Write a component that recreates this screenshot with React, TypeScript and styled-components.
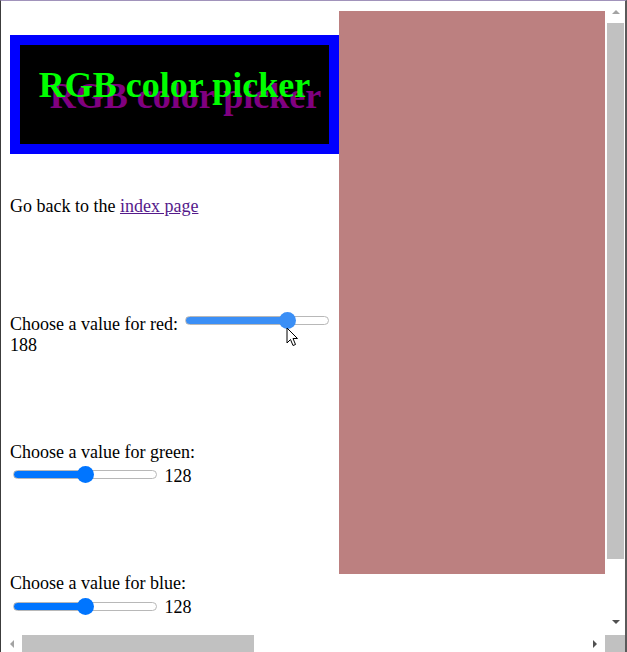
import React from "react";
import styled, {createGlobalStyle} from "styled-components";

const GlobalStyle = createGlobalStyle`
  html, body {
    margin: 0;
    padding: 0;
    background: #fff;
  }
  body {
    font-family: "Liberation Serif", "Times New Roman", serif;
    font-size: 18px;
    color: #000;
  }
`;

const Window = styled('div')`
  position: relative;
  width: 627px;
  height: 652px;
  box-sizing: border-box;
  border-top: 1px solid #a193bb;
  border-left: 1px solid #3c3c3c;
  border-right: 2px solid #5a5a5a;
  display: flex;
  flex-direction: column;
  overflow: hidden;
  background: #fff;
`;

const MainRow = styled('div')`
  display: flex;
  height: 634px;
`;

const Viewport = styled('div')`
  flex: 1;
  overflow: hidden;
`;

const Page = styled('div')`
  display: flex;
  align-items: flex-start;
  padding: 10px 0 0 9px;
`;

const LeftColumn = styled('div')`
  width: 329px;
  padding-top: 24px;
`;

const Banner = styled('div')`
  height: 99px;
  border: 10px solid #0000ff;
  background: #000;
`;

const Title = styled('h1')`
  margin: 0;
  padding-top: 19px;
  font-size: 36px;
  font-weight: bold;
  text-align: center;
  color: #00ff00;
  text-shadow: 11px 11px 0 #800080;
`;

const Intro = styled('p')`
  margin: 42px 0 0;
`;

const IndexLink = styled('a')`
  color: #551a8b;
  text-decoration: underline;
`;

const Section = styled('div')<{$gap: number}>`
  margin-top: ${p => p.$gap}px;
`;

// wrapper keeps the slider's baseline on its bottom edge, then drops it a bit
const SliderWrap = styled('span')<{$drop: number}>`
  display: inline-block;
  overflow: hidden;
  padding: 4px 3px 3px;
  vertical-align: -${p => p.$drop}px;
`;

// fill percentage comes in through --fill, set from the value at runtime
const Slider = styled('input')<{$accent: string}>`
  -webkit-appearance: none;
  appearance: none;
  display: block;
  width: 144px;
  height: 16px;
  margin: 0;
  padding: 0;
  background: transparent;

  &::-webkit-slider-runnable-track {
    height: 9px;
    box-sizing: border-box;
    border: 1px solid #b8b8b8;
    border-radius: 5px;
    background-origin: border-box;
    background-image: linear-gradient(to right, ${p => p.$accent} 0, ${p => p.$accent} var(--fill), #fff var(--fill));
  }

  &::-webkit-slider-thumb {
    -webkit-appearance: none;
    appearance: none;
    width: 17px;
    height: 17px;
    margin-top: -5px;
    border: none;
    border-radius: 50%;
    background: ${p => p.$accent};
  }
`;

const ColorBox = styled('div')<{$color: string}>`
  width: 266px;
  height: 563px;
  flex-shrink: 0;
  background: ${p => p.$color};
`;

const VBar = styled('div')`
  width: 17px;
  margin: 0 1px 0 0;
  display: flex;
  flex-direction: column;
  padding-bottom: 3px;
`;

const ArrowButton = styled('div')<{$size: number}>`
  flex: 0 0 ${p => p.$size}px;
  display: flex;
  align-items: center;
  justify-content: center;
`;

const VTrack = styled('div')`
  flex: 1;
  padding-top: 1px;
`;

const VThumb = styled('div')`
  height: 536px;
  background: #c1c1c1;
`;

const HBar = styled('div')`
  display: flex;
  height: 17px;
`;

const HTrack = styled('div')`
  flex: 1;
  display: flex;
`;

const HThumb = styled('div')`
  width: 232px;
  background: #c1c1c1;
`;

const Corner = styled('div')`
  width: 20px;
  background: #c1c1c1;
`;

const Pointer = styled('svg')`
  position: absolute;
  left: 285px;
  top: 326px;
  pointer-events: none;
`;

type Dir = "up" | "down" | "left" | "right";

function Arrow({dir, active}: {dir: Dir; active: boolean}) {
  const fill = active ? "#505050" : "#a3a3a3";
  const pts: Record<Dir, string> = {
    up: "0,4 4,0 8,4",
    down: "0,0 8,0 4,4",
    left: "4,0 4,8 0,4",
    right: "0,0 4,4 0,8",
  };
  const vertical = dir === "up" || dir === "down";
  return (
    <svg width={vertical ? 8 : 4} height={vertical ? 4 : 8} viewBox={vertical ? "0 0 8 4" : "0 0 4 8"}>
      <polygon points={pts[dir]} fill={fill}/>
    </svg>
  );
}

const SLIDER_W = 144;
const THUMB_W = 17;

function fillFor(value: number) {
  const center = THUMB_W / 2 + (value / 255) * (SLIDER_W - THUMB_W);
  return `${(center / SLIDER_W) * 100}%`;
}

const channels = [
  {name: "red", value: 188, gap: 91, drop: 1.5, accent: "#3b8ff6"},
  {name: "green", value: 128, gap: 86, drop: 4.3, accent: "#0075ff"},
  {name: "blue", value: 128, gap: 87, drop: 4.3, accent: "#0075ff"},
];

export default function App() {
  const [r, g, b] = channels.map(c => c.value);

  return (
    <Window>
      <GlobalStyle/>
      <MainRow>
        <Viewport>
          <Page>
            <LeftColumn>
              <Banner>
                <Title>RGB color picker</Title>
              </Banner>
              <Intro>
                Go back to the <IndexLink href="#">index page</IndexLink>
              </Intro>
              {channels.map(c => (
                <Section key={c.name} $gap={c.gap}>
                  {`Choose a value for ${c.name}:`}{" "}
                  <SliderWrap $drop={c.drop}>
                    <Slider
                      type="range"
                      min={0}
                      max={255}
                      defaultValue={c.value}
                      $accent={c.accent}
                      style={{"--fill": fillFor(c.value)} as React.CSSProperties}
                    />
                  </SliderWrap>
                  {" "}<span>{c.value}</span>
                </Section>
              ))}
            </LeftColumn>
            <ColorBox $color={`rgb(${r}, ${g}, ${b})`}/>
          </Page>
        </Viewport>
        <VBar>
          <ArrowButton $size={21}><Arrow dir="up" active={false}/></ArrowButton>
          <VTrack><VThumb/></VTrack>
          <ArrowButton $size={20}><Arrow dir="down" active/></ArrowButton>
        </VBar>
      </MainRow>
      <HBar>
        <ArrowButton $size={21}><Arrow dir="left" active={false}/></ArrowButton>
        <HTrack><HThumb/></HTrack>
        <ArrowButton $size={20}><Arrow dir="right" active/></ArrowButton>
        <Corner/>
      </HBar>
      <Pointer width="13" height="21" viewBox="0 0 13 21">
        <path d="M1 1 L1 16 L4.5 12.5 L7 18.5 L9.5 17.5 L7 11.5 L11.5 11.5 Z" fill="#fff" stroke="#000" strokeWidth="1" strokeLinejoin="miter"/>
      </Pointer>
    </Window>
  );
}
